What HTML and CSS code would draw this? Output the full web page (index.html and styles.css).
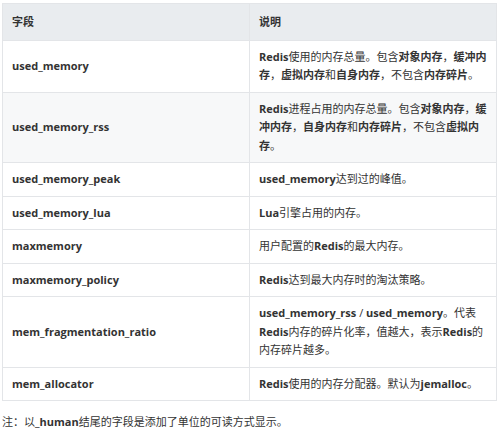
FILE: index.html
```html
<!DOCTYPE html>
<html lang="zh-CN">
<head>
<meta charset="utf-8">
<link rel="stylesheet" href="styles.css">
</head>
<body>
<div class="page">
  <table class="fields">
    <thead>
      <tr><th class="col-name">字段</th><th>说明</th></tr>
    </thead>
    <tbody>
      <tr><td class="name">used_memory</td><td><b>Redis</b>使用的内存总量。包含<b>对象内存</b>，<b>缓冲内存</b>，<b>虚拟内存</b>和<b>自身内存</b>，不包含<b>内存碎片</b>。</td></tr>
      <tr class="shade"><td class="name">used_memory_rss</td><td><b>Redis</b>进程占用的内存总量。包含<b>对象内存</b>，<b>缓冲内存</b>，<b>自身内存</b>和<b>内存碎片</b>，不包含<b>虚拟内存</b>。</td></tr>
      <tr><td class="name">used_memory_peak</td><td><b>used_memory</b>达到过的峰值。</td></tr>
      <tr><td class="name">used_memory_lua</td><td><b>Lua</b>引擎占用的内存。</td></tr>
      <tr><td class="name">maxmemory</td><td>用户配置的<b>Redis</b>的最大内存。</td></tr>
      <tr><td class="name">maxmemory_policy</td><td><b>Redis</b>达到最大内存时的淘汰策略。</td></tr>
      <tr><td class="name">mem_fragmentation_ratio</td><td><b>used_memory_rss</b> / <b>used_memory</b>。代表<b>Redis</b>内存的碎片化率，值越大，表示<b>Redis</b>的内存碎片越多。</td></tr>
      <tr><td class="name">mem_allocator</td><td><b>Redis</b>使用的内存分配器。默认为<b>jemalloc</b>。</td></tr>
    </tbody>
  </table>
  <p class="note">注：以<b>_human</b>结尾的字段是添加了单位的可读方式显示。</p>
</div>
</body>
</html>
```
FILE: styles.css
```css
html, body {
  margin: 0;
  padding: 0;
  background: #ffffff;
}
.page {
  padding: 3px 3px 0 2px;
  font-family: "Open Sans", "Noto Sans CJK SC", sans-serif;
  font-size: 11px;
  line-height: 18.5px;
  color: #333333;
}
.fields {
  width: 100%;
  border-collapse: collapse;
  table-layout: fixed;
}
.fields th,
.fields td {
  border: 1px solid #e3e5e8;
  text-align: left;
  vertical-align: middle;
  padding: 7px 8px 7px 9px;
}
.fields th {
  background: #e9ecef;
  font-weight: 700;
  padding-top: 8.5px;
  padding-bottom: 8.5px;
}
.fields .col-name {
  width: 247px;
  box-sizing: border-box;
}
.fields td.name {
  font-weight: 700;
}
.fields b {
  font-weight: 700;
}
.fields tr.shade td {
  background: #f7f8f9;
}
.note {
  margin: 12px 0 0 0;
}
.note b {
  font-weight: 700;
}
```
